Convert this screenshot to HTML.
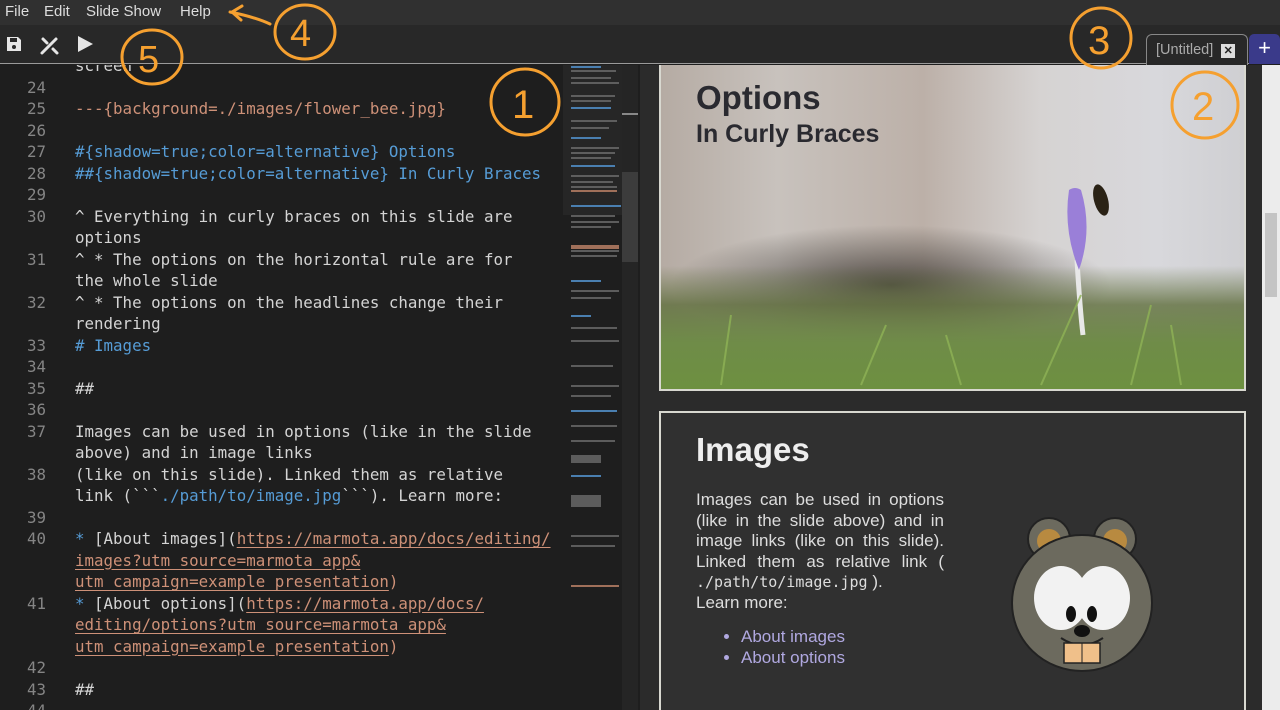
<!DOCTYPE html>
<html><head><meta charset="utf-8"><style>
*{margin:0;padding:0;box-sizing:border-box}
body{width:1280px;height:710px;overflow:hidden;background:#1e1e1e;font-family:"Liberation Sans",sans-serif;position:relative}
.menu{position:absolute;left:0;top:0;width:1280px;height:25px;background:#303030;color:#ddd;font-size:15px}
.menu span{position:absolute;top:3px}
.tool{position:absolute;left:0;top:25px;width:1280px;height:39px;background:#282828;border-bottom:1px solid #9a9a9a}
.editor{position:absolute;left:0;top:65px;width:640px;height:645px;background:#1e1e1e;overflow:hidden}
.code{position:absolute;left:0;top:-10px;width:560px;font-family:"DejaVu Sans Mono",monospace;font-size:15.8px;line-height:21.5px;color:#d4d4d4}
.r{height:21.5px;position:relative;white-space:pre}
.n{position:absolute;left:0;width:46px;text-align:right;color:#858585}
.t{position:absolute;left:75px}
.b{color:#569cd6}.o{color:#ce9178}.u{color:#ce9178;text-decoration:underline;text-underline-offset:3px}
.prev{position:absolute;left:640px;top:65px;width:622px;height:645px;background:#2b2b2b;overflow:hidden}
.psb{position:absolute;left:1262px;top:65px;width:18px;height:645px;background:#ececec}
</style></head><body>
<div class="menu"><span style="left:5px">File</span><span style="left:44px">Edit</span><span style="left:86px">Slide Show</span><span style="left:180px">Help</span></div>
<div class="tool">
<svg width="120" height="39" style="position:absolute;left:0;top:0">
<path d="M7 12h11l3 3v11H7z" fill="#e6e6e6"/><rect x="10" y="13" width="7" height="4" fill="#282828"/><circle cx="14" cy="22" r="2" fill="#282828"/>
<g stroke="#e6e6e6" stroke-width="3" stroke-linecap="round"><path d="M42 28l14-14"/><path d="M43 14l4 4M53 24l4 4"/></g>
<path d="M78 11l15 8-15 8z" fill="#e6e6e6"/>
</svg>
<div style="position:absolute;left:1146px;top:9px;width:102px;height:31px;background:#282828;border:1px solid #888;border-bottom:none;border-radius:6px 6px 0 0;color:#aaa;font-size:14.5px;padding:7px 0 0 9px">[Untitled] <span style="display:inline-block;background:#ddd;color:#222;font-size:11px;font-weight:bold;width:14px;height:14px;text-align:center;line-height:14px;margin-left:4px">✕</span></div>
<div style="position:absolute;left:1249px;top:9px;width:31px;height:30px;background:#3a3a8a;border-radius:5px 5px 0 0;color:#fff;font-size:22px;text-align:center;line-height:28px">+</div>
</div>

<div class="prev">
<div style="position:absolute;left:19px;top:-2px;width:587px;height:328px;border:2px solid #d8d8d0;background:linear-gradient(180deg,rgba(0,0,0,0) 0%,rgba(0,0,0,0) 62%,rgba(95,110,60,.8) 74%,#6f8c48 86%,#6d9040 100%),radial-gradient(ellipse 220px 60px at 230px 220px,rgba(60,55,50,.85),transparent),linear-gradient(90deg,#b5aba3 0%,#c8c2bd 20%,#bcb0a8 45%,#d6d3d2 65%,#d8d8dc 85%,#cfcfd2 100%);overflow:hidden">
<div style="position:absolute;left:35px;top:14px;color:#2a2a30;font-weight:bold;font-size:33px">Options</div>
<div style="position:absolute;left:35px;top:55px;color:#2a2a30;font-weight:bold;font-size:25px">In Curly Braces</div>
<svg width="587" height="328" style="position:absolute;left:0;top:0">
<path d="M416 195 q3 50 6 75" stroke="#e8e8e8" stroke-width="5" fill="none"/>
<path d="M408 125 q-6 40 10 80 q14 -40 2 -80 q-6 -4 -12 0z" fill="#9a7fd8"/>
<ellipse cx="440" cy="135" rx="7" ry="16" fill="#2a2215" transform="rotate(-15 440 135)"/>
<g stroke="#8fb356" stroke-width="2" opacity=".8"><path d="M60 320 l10 -70"/><path d="M200 320 l25 -60"/><path d="M300 320 l-15 -50"/><path d="M380 320 l40 -90"/><path d="M470 320 l20 -80"/><path d="M520 320 l-10 -60"/></g>
</svg>
</div>
<div style="position:absolute;left:19px;top:346px;width:587px;height:320px;border:2px solid #d8d8d0;background:#303030">
<div style="position:absolute;left:35px;top:18px;color:#eee;font-weight:bold;font-size:33px">Images</div>
<div style="position:absolute;left:35px;top:77px;width:248px;color:#ddd;font-size:17px;line-height:20.5px;text-align:justify">Images can be used in options (like in the slide above) and in image links (like on this slide). Linked them as relative link ( <span style="font-family:'DejaVu Sans Mono',monospace;font-size:15px">./path/to/image.jpg</span> ).<br>Learn more:</div>
<ul style="position:absolute;left:80px;top:214px;color:#ddd;font-size:17px;line-height:20.5px"><li style="color:#b0a8e0">About images</li><li style="color:#b0a8e0">About options</li></ul>
<svg width="160" height="170" style="position:absolute;left:340px;top:100px">
<circle cx="48" cy="26" r="21" fill="#6c6a5e" stroke="#222" stroke-width="2"/><circle cx="48" cy="28" r="12" fill="#b88a40"/>
<circle cx="114" cy="26" r="21" fill="#6c6a5e" stroke="#222" stroke-width="2"/><circle cx="114" cy="28" r="12" fill="#b88a40"/>
<ellipse cx="81" cy="90" rx="70" ry="68" fill="#6c6a5e" stroke="#222" stroke-width="2"/>
<ellipse cx="60" cy="85" rx="27" ry="32" fill="#f2f2f2"/><ellipse cx="102" cy="85" rx="27" ry="32" fill="#f2f2f2"/>
<ellipse cx="70" cy="101" rx="5" ry="8" fill="#111"/><ellipse cx="91" cy="101" rx="5" ry="8" fill="#111"/>
<ellipse cx="81" cy="118" rx="8" ry="6" fill="#111"/>
<path d="M60 125 q21 14 42 0" stroke="#222" stroke-width="2" fill="none"/>
<rect x="63" y="130" width="36" height="20" fill="#f0c08a" stroke="#222" stroke-width="1.5"/><path d="M81 130v20" stroke="#222"/>
</svg>
</div>
</div>
<div class="psb"><div style="position:absolute;left:3px;top:148px;width:12px;height:84px;background:#c4c4c4"></div></div>

<div class="editor">
<div class="code">
<div class="r"><span class="t">screen</span></div>
<div class="r"><span class="n">24</span></div>
<div class="r"><span class="n">25</span><span class="t o">---{background=./images/flower_bee.jpg}</span></div>
<div class="r"><span class="n">26</span></div>
<div class="r"><span class="n">27</span><span class="t b">#{shadow=true;color=alternative} Options</span></div>
<div class="r"><span class="n">28</span><span class="t b">##{shadow=true;color=alternative} In Curly Braces</span></div>
<div class="r"><span class="n">29</span></div>
<div class="r"><span class="n">30</span><span class="t">^ Everything in curly braces on this slide are</span></div>
<div class="r"><span class="t">options</span></div>
<div class="r"><span class="n">31</span><span class="t">^ * The options on the horizontal rule are for</span></div>
<div class="r"><span class="t">the whole slide</span></div>
<div class="r"><span class="n">32</span><span class="t">^ * The options on the headlines change their</span></div>
<div class="r"><span class="t">rendering</span></div>
<div class="r"><span class="n">33</span><span class="t b"># Images</span></div>
<div class="r"><span class="n">34</span></div>
<div class="r"><span class="n">35</span><span class="t">##</span></div>
<div class="r"><span class="n">36</span></div>
<div class="r"><span class="n">37</span><span class="t">Images can be used in options (like in the slide</span></div>
<div class="r"><span class="t">above) and in image links</span></div>
<div class="r"><span class="n">38</span><span class="t">(like on this slide). Linked them as relative</span></div>
<div class="r"><span class="t">link (&#96;&#96;&#96;<span class="b">./path/to/image.jpg</span>&#96;&#96;&#96;). Learn more:</span></div>
<div class="r"><span class="n">39</span></div>
<div class="r"><span class="n">40</span><span class="t"><span class="b">*</span> [About images](<span class="u">https://marmota.app/docs/editing/</span></span></div>
<div class="r"><span class="t"><span class="u">images?utm_source=marmota_app&amp;</span></span></div>
<div class="r"><span class="t"><span class="u">utm_campaign=example_presentation</span><span class="o">)</span></span></div>
<div class="r"><span class="n">41</span><span class="t"><span class="b">*</span> [About options](<span class="u">https://marmota.app/docs/</span></span></div>
<div class="r"><span class="t"><span class="u">editing/options?utm_source=marmota_app&amp;</span></span></div>
<div class="r"><span class="t"><span class="u">utm_campaign=example_presentation</span><span class="o">)</span></span></div>
<div class="r"><span class="n">42</span></div>
<div class="r"><span class="n">43</span><span class="t">##</span></div>
<div class="r"><span class="n">44</span></div>
</div>
<svg width="59" height="645" style="position:absolute;left:563px;top:0">
<rect x="0" y="0" width="59" height="150" fill="#262626"/>
<g fill="#777" opacity=".7">
<rect x="8" y="5" width="45" height="2"/><rect x="8" y="12" width="40" height="2"/><rect x="8" y="17" width="48" height="2"/><rect x="8" y="30" width="44" height="2"/><rect x="8" y="35" width="40" height="2"/><rect x="8" y="55" width="46" height="2"/><rect x="8" y="62" width="38" height="2"/><rect x="8" y="82" width="48" height="2"/><rect x="8" y="87" width="44" height="2"/><rect x="8" y="92" width="40" height="2"/><rect x="8" y="110" width="48" height="2"/><rect x="8" y="116" width="42" height="2"/><rect x="8" y="121" width="46" height="2"/><rect x="8" y="150" width="44" height="2"/><rect x="8" y="156" width="48" height="2"/><rect x="8" y="161" width="40" height="2"/><rect x="8" y="185" width="48" height="2"/><rect x="8" y="190" width="46" height="2"/><rect x="8" y="225" width="48" height="2"/><rect x="8" y="232" width="40" height="2"/><rect x="8" y="262" width="46" height="2"/><rect x="8" y="275" width="48" height="2"/><rect x="8" y="300" width="42" height="2"/><rect x="8" y="320" width="48" height="2"/><rect x="8" y="330" width="40" height="2"/><rect x="8" y="360" width="46" height="2"/><rect x="8" y="375" width="44" height="2"/><rect x="8" y="390" width="30" height="8"/><rect x="8" y="430" width="30" height="12"/><rect x="8" y="470" width="48" height="2"/><rect x="8" y="480" width="44" height="2"/></g>
<g fill="#4a7fb0"><rect x="8" y="1" width="30" height="2"/><rect x="8" y="42" width="40" height="2"/><rect x="8" y="72" width="30" height="2"/><rect x="8" y="100" width="44" height="2"/><rect x="8" y="140" width="50" height="2"/><rect x="8" y="215" width="30" height="2"/><rect x="8" y="250" width="20" height="2"/><rect x="8" y="345" width="46" height="2"/><rect x="8" y="410" width="30" height="2"/></g>
<g fill="#a0705a"><rect x="8" y="125" width="46" height="2"/><rect x="8" y="180" width="48" height="4"/><rect x="8" y="520" width="48" height="2"/></g>
</svg>
<div style="position:absolute;left:622px;top:0;width:16px;height:645px;background:#252525"><div style="position:absolute;left:0;top:107px;width:16px;height:90px;background:#3c3c3c"></div><div style="position:absolute;left:0;top:48px;width:16px;height:2px;background:#888"></div></div>
</div>

<svg width="1280" height="710" style="position:absolute;left:0;top:0" fill="none" stroke="#f5a030" stroke-width="3" stroke-linecap="round">
<path d="M230 12 q25 5 40 12 M232 12 l10 -6 M232 12 l9 8"/>
<ellipse cx="305" cy="32" rx="30" ry="27"/><text x="290" y="46" fill="#f5a030" stroke="none" font-size="38" font-family="Liberation Sans">4</text>
<ellipse cx="152" cy="57" rx="30" ry="27"/><text x="138" y="72" fill="#f5a030" stroke="none" font-size="38" font-family="Liberation Sans">5</text>
<ellipse cx="525" cy="102" rx="34" ry="33"/><text x="512" y="118" fill="#f5a030" stroke="none" font-size="40" font-family="Liberation Sans">1</text>
<ellipse cx="1101" cy="38" rx="30" ry="30"/><text x="1088" y="54" fill="#f5a030" stroke="none" font-size="40" font-family="Liberation Sans">3</text>
<ellipse cx="1205" cy="105" rx="33" ry="33"/><text x="1192" y="120" fill="#f5a030" stroke="none" font-size="40" font-family="Liberation Sans">2</text>
</svg>
</body></html>
